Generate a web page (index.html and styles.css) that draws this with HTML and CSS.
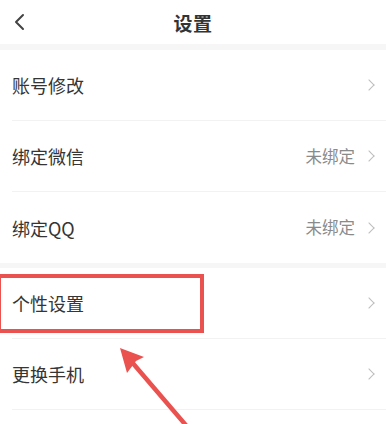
FILE: index.html
```html
<!DOCTYPE html>
<html lang="zh-CN">
<head>
<meta charset="utf-8">
<title>设置</title>
<link rel="stylesheet" href="styles.css">
</head>
<body>
<div class="page">
  <header class="topbar">
    <svg class="back" width="14" height="20" viewBox="0 0 14 20"><polyline points="10,3 3,10 10,17" fill="none" stroke="#444" stroke-width="2" stroke-linecap="round" stroke-linejoin="round"/></svg>
    <h1 class="title">设置</h1>
  </header>
  <div class="band"></div>
  <ul class="group">
    <li class="row"><span class="label">账号修改</span><span class="right"><span class="chev"></span></span></li>
    <li class="row"><span class="label">绑定微信</span><span class="right"><span class="value">未绑定</span><span class="chev"></span></span></li>
    <li class="row"><span class="label">绑定QQ</span><span class="right"><span class="value">未绑定</span><span class="chev"></span></span></li>
  </ul>
  <div class="band band-thin"></div>
  <ul class="group">
    <li class="row"><span class="label">个性设置</span><span class="right"><span class="chev"></span></span></li>
    <li class="row"><span class="label">更换手机</span><span class="right"><span class="chev"></span></span></li>
  </ul>
  <div class="highlight"></div>
  <svg class="arrow" width="386" height="424" viewBox="0 0 386 424">
    <line x1="190" y1="430" x2="125" y2="354" stroke="#ea524f" stroke-width="4.5" stroke-linecap="round"/>
    <polygon points="120,348 144,357 136,361 127,373" fill="#ea524f"/>
  </svg>
</div>
</body>
</html>
```
FILE: styles.css
```css
* { box-sizing: border-box; }
html, body { margin: 0; padding: 0; background: #fff; }
body {
  font-family: "Noto Sans CJK SC", "Noto Sans", sans-serif;
  color: #333;
  width: 386px;
  height: 424px;
  overflow: hidden;
}
.page { position: relative; width: 386px; height: 424px; overflow: hidden; }
.topbar {
  height: 44px;
  display: flex;
  align-items: center;
  justify-content: center;
  position: relative;
}
.back { position: absolute; left: 13px; top: 12px; }
.title {
  margin: 0;
  font-size: 19px;
  font-weight: 700;
  color: #333;
  line-height: 1;
  letter-spacing: 0.5px;
}
.band { height: 6px; background: #f6f6f6; }
.band-thin { height: 5px; }
.group { list-style: none; margin: 0; padding: 0 0 0 12px; }
.row {
  height: 71px;
  display: flex;
  align-items: center;
  justify-content: space-between;
  padding-right: 10px;
  border-bottom: 1px solid #f2f2f2;
}
.group .row:last-child { border-bottom: none; }
.group:last-of-type .row:last-child { border-bottom: 1px solid #f2f2f2; }
.label { font-size: 18px; color: #353535; line-height: 1; }
.right { display: flex; align-items: center; gap: 10px; }
.value { font-size: 16.5px; color: #8a8a8a; line-height: 1; }
.chev {
  width: 8px;
  height: 8px;
  border-top: 1.3px solid #bdbdbd;
  border-right: 1.3px solid #bdbdbd;
  transform: rotate(45deg);
  margin-right: 3px;
}
.highlight {
  position: absolute;
  left: -3px;
  top: 274px;
  width: 207px;
  height: 59px;
  border: 4px solid #ea524f;
}
.arrow { position: absolute; left: 0; top: 0; pointer-events: none; }
```
